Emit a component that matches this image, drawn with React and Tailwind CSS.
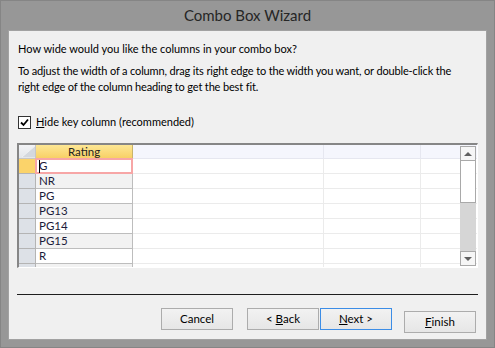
import React from 'react';

const ratings = ['G', 'NR', 'PG', 'PG13', 'PG14', 'PG15', 'R', ''];

const font = { fontFamily: 'Lato, "Liberation Sans", sans-serif' };

const Button = ({ children, focused }) => (
  <button
    className={`w-[72px] h-[22px] text-[11.5px] text-black bg-gradient-to-b from-[#f2f2f2] to-[#e6e6e6] border ${
      focused ? 'border-[#3c8de6]' : 'border-[#acacac]'
    }`}
  >
    {children}
  </button>
);

const GridRow = ({ value, idx }) => {
  const selected = idx === 0;
  const shade = idx % 2 === 1 ? 'bg-[#f2f2f2]' : 'bg-white';
  return (
    <div className="flex h-[15px] shrink-0">
      <div
        className={`w-[17px] shrink-0 border-r border-b border-[#b4b4b4] ${
          selected ? 'bg-[#fbd36a]' : 'bg-[#dde1e7]'
        }`}
      />
      <div
        className={`relative w-[97px] shrink-0 border-r border-b border-[#bdbdbd] pl-[3px] text-[11.5px] leading-[14px] text-[#1b1b3a] ${
          selected ? 'bg-white' : shade
        }`}
      >
        {value}
        {selected && (
          <>
            <div className="absolute -left-px -top-px w-[98px] h-[16px] border-2 border-[#f7a6a6]" />
            <div className="absolute left-[3px] top-[1px] w-px h-[13px] bg-black" />
          </>
        )}
      </div>
      <div className="w-[191px] shrink-0 border-r border-b border-[#ebebeb] bg-white" />
      <div className="w-[97px] shrink-0 border-r border-b border-[#ebebeb] bg-white" />
      <div className="flex-1 border-b border-[#ebebeb] bg-white" />
    </div>
  );
};

const Scrollbar = () => (
  <div className="absolute right-[1px] top-[1px] w-[16px] h-[120px] flex flex-col bg-[#d6d6d6]">
    <div className="h-[15px] bg-[#f6f6f6] border border-[#a9a9a9] flex items-center justify-center">
      <div className="w-0 h-0 border-l-[4px] border-r-[4px] border-b-[4px] border-l-transparent border-r-transparent border-b-[#606060]" />
    </div>
    <div className="h-[42px] bg-white border border-[#a9a9a9] border-t-0" />
    <div className="flex-1" />
    <div className="h-[15px] bg-[#f6f6f6] border border-[#a9a9a9] flex items-center justify-center">
      <div className="w-0 h-0 border-l-[4px] border-r-[4px] border-t-[4px] border-l-transparent border-r-transparent border-t-[#606060]" />
    </div>
  </div>
);

export default function App() {
  return (
    <div className="w-[495px] h-[348px] bg-[#979797] flex flex-col border border-[#858585]" style={font}>
      <div className="h-[29px] flex items-center justify-center text-[15px] text-[#262626]">
        Combo Box Wizard
      </div>
      <div className="mx-[7px] mb-[7px] flex-1 bg-[#f0f0f0] border border-[#a2a2a2] flex flex-col">
        <p className="ml-[9px] mt-[10px] text-[11px] leading-[15px] text-black">
          How wide would you like the columns in your combo box?
        </p>
        <p className="ml-[9px] mt-[7px] w-[468px] text-[11px] leading-[16px] tracking-[-0.15px] whitespace-nowrap text-black">
          To adjust the width of a column, drag its right edge to the width you want, or double-click the
          <br />
          right edge of the column heading to get the best fit.
        </p>
        <label className="ml-[9px] mt-[19px] flex items-center gap-[5px] h-[16px] text-[11px] text-black">
          <span className="w-[13px] h-[13px] border border-[#333] bg-white flex items-center justify-center">
            <svg width="9" height="9" viewBox="0 0 9 9">
              <path d="M1 4.5 L3.5 7 L8 1.5" fill="none" stroke="#000" strokeWidth="1.8" />
            </svg>
          </span>
          <span>
            <span className="underline">H</span>ide key column (recommended)
          </span>
        </label>
        <div className="relative mx-[8px] mt-[13px] h-[125px] border-t-2 border-l-2 border-[#868686] border-r border-b border-r-white border-b-white overflow-hidden flex flex-col">
          <div className="flex h-[14px] shrink-0">
            <div className="relative w-[17px] shrink-0 bg-gradient-to-b from-[#f3f4f6] to-[#e3e6ea] border-r border-b border-[#c6c6c6] overflow-hidden">
              <svg className="absolute inset-0" width="17" height="13" viewBox="0 0 17 13">
                <polygon points="16,1 16,12 3,12" fill="#d4d8de" />
                <line x1="16" y1="1" x2="3" y2="12" stroke="#eef0f3" />
              </svg>
            </div>
            <div className="w-[97px] shrink-0 bg-gradient-to-b from-[#fde794] to-[#f8d065] border-r border-b border-[#c9b46a] text-[11.5px] leading-[13px] text-center text-[#222]">
              Rating
            </div>
            <div className="w-[191px] shrink-0 bg-[#f5f6fd] border-r border-b border-[#e6e7f0]" />
            <div className="w-[97px] shrink-0 bg-[#f5f6fd] border-r border-b border-[#e6e7f0]" />
            <div className="flex-1 bg-[#f5f6fd] border-b border-[#e6e7f0]" />
          </div>
          {ratings.map((r, i) => (
            <GridRow key={i} value={r} idx={i} />
          ))}
          <Scrollbar />
        </div>
        <div className="mx-[8px] mt-[26px] h-px bg-[#1e1e1e]" />
        <div className="flex justify-end mt-[13px] mr-[10px]">
          <Button>Cancel</Button>
          <div className="ml-[14px] flex gap-px">
            <Button>
              &lt; <span className="underline">B</span>ack
            </Button>
            <Button focused>
              <span className="underline">N</span>ext &gt;
            </Button>
          </div>
          <div className="ml-[12px]">
            <Button>
              <span className="underline">F</span>inish
            </Button>
          </div>
        </div>
      </div>
    </div>
  );
}
